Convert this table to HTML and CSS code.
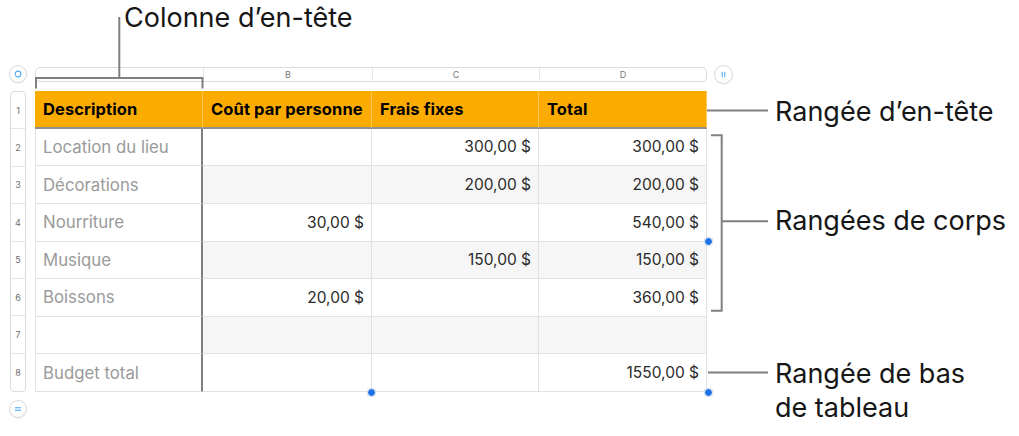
FILE: index.html
```html
<!DOCTYPE html>
<html lang="fr">
<head>
<meta charset="utf-8">
<title>Tableau</title>
<link rel="stylesheet" href="styles.css">
</head>
<body>
<div class="canvas">
  <div class="sheet">
    <div class="handle handle-tl">
      <svg width="18" height="18" viewBox="0 0 18 18"><circle cx="9" cy="9" r="3.2" fill="none" stroke="#4fa6f2" stroke-width="1.2"/></svg>
    </div>
    <div class="colbar">
      <div class="colseg"></div>
      <div class="colseg">B</div>
      <div class="colseg">C</div>
      <div class="colseg last">D</div>
    </div>
    <div class="handle handle-tr">
      <svg width="19" height="19" viewBox="0 0 19 19"><rect x="7.5" y="6.5" width="1.2" height="6" fill="#4fa6f2"/><rect x="10.3" y="6.5" width="1.2" height="6" fill="#4fa6f2"/></svg>
    </div>

    <div class="rownums">
      <div class="rownum">1</div>
      <div class="rownum">2</div>
      <div class="rownum">3</div>
      <div class="rownum">4</div>
      <div class="rownum">5</div>
      <div class="rownum">6</div>
      <div class="rownum">7</div>
      <div class="rownum last">8</div>
    </div>

    <div class="table">
      <div class="cell head first">Description</div>
      <div class="cell head">Coût par personne</div>
      <div class="cell head">Frais fixes</div>
      <div class="cell head">Total</div>

      <div class="cell hcol">Location du lieu</div>
      <div class="cell num"></div>
      <div class="cell num">300,00 $</div>
      <div class="cell num">300,00 $</div>

      <div class="cell hcol">Décorations</div>
      <div class="cell num alt"></div>
      <div class="cell num alt">200,00 $</div>
      <div class="cell num alt">200,00 $</div>

      <div class="cell hcol">Nourriture</div>
      <div class="cell num">30,00 $</div>
      <div class="cell num"></div>
      <div class="cell num">540,00 $</div>

      <div class="cell hcol">Musique</div>
      <div class="cell num alt"></div>
      <div class="cell num alt">150,00 $</div>
      <div class="cell num alt">150,00 $</div>

      <div class="cell hcol">Boissons</div>
      <div class="cell num">20,00 $</div>
      <div class="cell num"></div>
      <div class="cell num">360,00 $</div>

      <div class="cell hcol"></div>
      <div class="cell num alt"></div>
      <div class="cell num alt"></div>
      <div class="cell num alt"></div>

      <div class="cell hcol foot">Budget total</div>
      <div class="cell num foot"></div>
      <div class="cell num foot"></div>
      <div class="cell num foot">1550,00 $</div>
    </div>
    <div class="cell-gap"></div>

    <div class="handle handle-bl">
      <svg width="18" height="18" viewBox="0 0 18 18"><rect x="5.5" y="7" width="7" height="1.2" fill="#4fa6f2"/><rect x="5.5" y="9.8" width="7" height="1.2" fill="#4fa6f2"/></svg>
    </div>
  </div>

  <svg class="callouts" width="1019" height="436" viewBox="0 0 1019 436">
    <g fill="none" stroke="#808080" stroke-width="2">
      <path d="M119.3 17 V78 M36 88.5 V78 H202.5 V88.5"/>
      <path d="M707 110.5 H768"/>
      <path d="M711 135.3 H721.7 V310.7 H711 M721.7 221.2 H768"/>
      <path d="M708 372.5 H768"/>
    </g>
  </svg>

  <div class="dot dot-mid"></div>
  <div class="dot dot-bc"></div>
  <div class="dot dot-br"></div>

  <div class="label label-col">Colonne d’en-tête</div>
  <div class="label label-head">Rangée d’en-tête</div>
  <div class="label label-body">Rangées de corps</div>
  <div class="label label-foot">Rangée de bas<br>de tableau</div>
</div>
</body>
</html>
```

FILE: styles.css
```css
* { box-sizing: border-box; }

html, body {
  margin: 0;
  padding: 0;
  background: #ffffff;
}

body {
  font-family: "Inter", "Liberation Sans", sans-serif;
  color: #1a1a1a;
}

.canvas {
  position: relative;
  width: 1019px;
  height: 436px;
  overflow: hidden;
  padding: 65px 0 0 9px;
}

.sheet {
  display: grid;
  grid-template-columns: 26px 679px 19px;
  grid-template-rows: 26px 309px 18px;
}

.handle {
  border: 1px solid #d9d9d9;
  border-radius: 50%;
  background: #fff;
  box-shadow: 0 1px 1px rgba(0,0,0,0.06);
  display: flex;
  align-items: center;
  justify-content: center;
}

.handle svg { display: block; }

.handle-tl {
  width: 18px;
  height: 18px;
  align-self: start;
  justify-self: start;
}

.handle-tr {
  width: 19px;
  height: 19px;
  align-self: start;
}

.handle-bl {
  width: 18px;
  height: 18px;
  grid-column: 1;
}

.colbar {
  margin-top: 2px;
  height: 15px;
  width: 672px;
  border: 1px solid #dcdcdc;
  border-radius: 5px;
  display: grid;
  grid-template-columns: 168px 169px 167px 1fr;
  align-self: start;
}

.colseg {
  border-right: 1px solid #e6e6e6;
  font-size: 9px;
  color: #7a7a7a;
  display: flex;
  align-items: center;
  justify-content: center;
  line-height: 1;
}

.colseg.last { border-right: none; }

.rownums {
  width: 16px;
  height: 301px;
  margin-left: 1px;
  border: 1px solid #dcdcdc;
  border-radius: 4px;
  display: grid;
  grid-template-rows: repeat(8, 1fr);
}

.rownum {
  border-bottom: 1px solid #e6e6e6;
  font-size: 9px;
  color: #6d6d6d;
  display: flex;
  align-items: center;
  justify-content: center;
}

.rownum.last { border-bottom: none; }

.table {
  width: 672px;
  height: 301px;
  display: grid;
  grid-template-columns: 168px 169px 167px 168px;
  grid-template-rows: repeat(8, 1fr);
}

.cell {
  border-right: 1px solid #e2e2e2;
  border-bottom: 1px solid #e2e2e2;
  display: flex;
  align-items: center;
  padding: 0 7px 0 8px;
  font-size: 15.5px;
  white-space: nowrap;
}

.cell.head {
  background: #fcab00;
  color: #000;
  font-weight: 700;
  font-size: 16.5px;
  letter-spacing: 0.1px;
  border-right: 1px solid #fdc75a;
  border-bottom: 2px solid #8e8e8e;
}

.cell.head:last-child { border-right: 1px solid #fcab00; }

.cell.hcol {
  color: #9a9a9a;
  font-size: 16.8px;
  padding-left: 7px;
  border-left: 1px solid #e2e2e2;
  border-right: 2px solid #827d79;
}

.cell.num {
  justify-content: flex-end;
  color: #2a2a2a;
}

.cell.alt { background: #f6f6f6; }

.callouts {
  position: absolute;
  left: 0;
  top: 0;
  pointer-events: none;
}

.dot {
  position: absolute;
  width: 9px;
  height: 9px;
  border-radius: 50%;
  background: #1c72e6;
  border: 1.5px solid #ffffff;
  box-shadow: 0 0 1px rgba(0,0,0,0.25);
}

.dot-mid { left: 703.5px; top: 237px; }
.dot-bc  { left: 367px;   top: 387.5px; }
.dot-br  { left: 703.5px; top: 387.5px; }

.label {
  position: absolute;
  font-size: 27px;
  line-height: 34px;
  color: #161616;
  white-space: nowrap;
}

.label-col  { left: 124px; top: 1px; line-height: normal; }
.label-head { left: 775px; top: 95px; }
.label-body { left: 775px; top: 204px; }
.label-foot { left: 775px; top: 357px; }
```
